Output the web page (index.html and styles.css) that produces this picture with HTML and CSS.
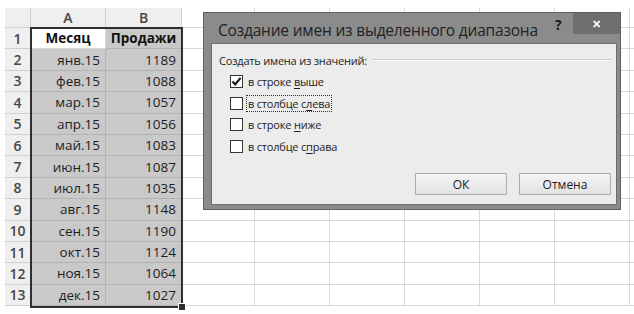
FILE: index.html
```html
<!DOCTYPE html>
<html lang="ru">

<head>
    <meta charset="UTF-8">
    <meta name="viewport" content="width=device-width, initial-scale=1.0">
    <title>Создание имен из выделенного диапазона</title>
    <link rel="stylesheet" href="styles.css">
</head>

<body>
    <div class="sheet">
        <div class="hd corner"></div><div class="hd">A</div><div class="hd">B</div><div class="blank"></div><div class="blank"></div><div class="blank"></div><div class="blank"></div><div class="blank"></div><div class="blank"></div><div class="blank"></div>

        <div class="hd row">1</div><div class="cell active bold center">Месяц</div><div class="cell sel bold center">Продажи</div><div></div><div></div><div></div><div></div><div></div><div></div><div></div>
        <div class="hd row">2</div><div class="cell sel">янв.15</div><div class="cell sel">1189</div><div></div><div></div><div></div><div></div><div></div><div></div><div></div>
        <div class="hd row">3</div><div class="cell sel">фев.15</div><div class="cell sel">1088</div><div></div><div></div><div></div><div></div><div></div><div></div><div></div>
        <div class="hd row">4</div><div class="cell sel">мар.15</div><div class="cell sel">1057</div><div></div><div></div><div></div><div></div><div></div><div></div><div></div>
        <div class="hd row">5</div><div class="cell sel">апр.15</div><div class="cell sel">1056</div><div></div><div></div><div></div><div></div><div></div><div></div><div></div>
        <div class="hd row">6</div><div class="cell sel">май.15</div><div class="cell sel">1083</div><div></div><div></div><div></div><div></div><div></div><div></div><div></div>
        <div class="hd row">7</div><div class="cell sel">июн.15</div><div class="cell sel">1087</div><div></div><div></div><div></div><div></div><div></div><div></div><div></div>
        <div class="hd row">8</div><div class="cell sel">июл.15</div><div class="cell sel">1035</div><div></div><div></div><div></div><div></div><div></div><div></div><div></div>
        <div class="hd row">9</div><div class="cell sel">авг.15</div><div class="cell sel">1148</div><div></div><div></div><div></div><div></div><div></div><div></div><div></div>
        <div class="hd row">10</div><div class="cell sel">сен.15</div><div class="cell sel">1190</div><div></div><div></div><div></div><div></div><div></div><div></div><div></div>
        <div class="hd row">11</div><div class="cell sel">окт.15</div><div class="cell sel">1124</div><div></div><div></div><div></div><div></div><div></div><div></div><div></div>
        <div class="hd row">12</div><div class="cell sel">ноя.15</div><div class="cell sel">1064</div><div></div><div></div><div></div><div></div><div></div><div></div><div></div>
        <div class="hd row">13</div><div class="cell sel">дек.15</div><div class="cell sel">1027</div><div></div><div></div><div></div><div></div><div></div><div></div><div></div>

        <div class="selection"><span class="handle"></span></div>
    </div>

    <div class="dialog">
        <div class="titlebar">
            <span class="title">Создание имен из выделенного диапазона</span>
            <span class="help">?</span>
            <span class="close">✕</span>
        </div>
        <div class="panel">
            <div class="group">
                <span>Создать имена из значений:</span>
                <span class="rule"></span>
            </div>
            <label class="check"><span class="box on"><svg viewBox="0 0 11 11" width="11" height="11"><path d="M1.5 5.5 L4.2 8.4 L9.6 1.8" fill="none" stroke="#111" stroke-width="2"/></svg></span><span class="txt">в строке <u>в</u>ыше</span></label>
            <label class="check"><span class="box"></span><span class="txt focus">в столбце с<u>л</u>ева</span></label>
            <label class="check"><span class="box"></span><span class="txt">в строке <u>н</u>иже</span></label>
            <label class="check"><span class="box"></span><span class="txt">в столбце с<u>п</u>рава</span></label>
            <div class="buttons">
                <button class="btn">ОК</button>
                <button class="btn">Отмена</button>
            </div>
        </div>
    </div>
</body>

</html>
```

FILE: styles.css
```css
body {
    margin: 0;
    padding: 0;
    background: white;
    font-family: "Open Sans", "Noto Sans", sans-serif;
    overflow: hidden;
    width: 634px;
    height: 314px;
    position: relative;
}

/* spreadsheet */

.sheet {
    display: grid;
    grid-template-columns: 26px 75px 76px 73px 75px 75px 75px 75px 75px 75px;
    grid-template-rows: 20px repeat(13, 21.4px);
    margin: 8px 0 0 5px;
    position: relative;
    width: 700px;
}

.sheet > div {
    box-sizing: border-box;
    border-right: 1px solid #d9d9d9;
    border-bottom: 1px solid #d9d9d9;
}

.hd {
    background: #efefef;
    color: #474747;
    font-size: 14px;
    font-weight: 600;
    display: flex;
    align-items: center;
    justify-content: center;
    border-color: #d0d0d0 !important;
}

.corner {
    background: #efefef;
}

.cell {
    font-size: 13.5px;
    color: #1e1e1e;
    display: flex;
    align-items: center;
    justify-content: flex-end;
    padding-right: 5px;
}

.sel {
    background: #c9c9c9;
    border-color: #b3b3b3 !important;
}

.active {
    background: white;
}

.bold {
    font-weight: 700;
    color: #111;
}

.center {
    justify-content: center;
    padding-right: 0;
}

.selection {
    position: absolute;
    left: 25px;
    top: 19px;
    width: 153px;
    height: 281px;
    box-sizing: border-box;
    border: 2px solid #2f2f2f !important;
}

.handle {
    position: absolute;
    right: -5px;
    bottom: -5px;
    width: 6px;
    height: 6px;
    background: #2f2f2f;
    border: 1px solid white;
}

/* dialog */

.dialog {
    position: absolute;
    left: 203px;
    top: 12px;
    width: 418px;
    height: 198px;
    box-sizing: border-box;
    background: #8b8b8b;
    border: 1px solid #5f5f5f;
    display: flex;
    flex-direction: column;
}

.titlebar {
    height: 30px;
    display: flex;
    align-items: flex-start;
    position: relative;
}

.title {
    margin: 6px 0 0 14px;
    font-size: 15.5px;
    color: #222;
    letter-spacing: -0.2px;
}

.help {
    position: absolute;
    left: 351px;
    top: 2px;
    font-size: 14px;
    font-weight: 700;
    color: #1a1a1a;
}

.close {
    position: absolute;
    right: 0;
    top: 0;
    width: 47px;
    height: 21px;
    background: #6f6f6f;
    color: white;
    font-size: 11px;
    font-weight: 700;
    display: flex;
    align-items: center;
    justify-content: center;
}

.panel {
    flex: 1;
    margin: 0 3px 4px 7px;
    background: #ececec;
    border: 1px solid #6c6c6c;
    padding: 8px 5px 9px 7px;
    display: flex;
    flex-direction: column;
    font-size: 11px;
    letter-spacing: -0.2px;
    color: #1d1d1d;
}

.group {
    display: flex;
    align-items: center;
    height: 16px;
    margin-bottom: 3px;
}

.rule {
    flex: 1;
    margin-left: 6px;
    border-top: 1px solid #cdcdcd;
    border-bottom: 1px solid #f8f8f8;
}

.check {
    display: flex;
    align-items: center;
    height: 21.5px;
    padding-left: 11px;
}

.box {
    width: 13px;
    height: 13px;
    box-sizing: border-box;
    border: 1px solid #333;
    background: white;
    display: flex;
    align-items: center;
    justify-content: center;
}

.txt {
    margin-left: 3px;
    padding: 0 1px;
    border: 1px dotted transparent;
}

.focus {
    border-color: #333;
}

.txt u {
    text-underline-offset: 2px;
}

.buttons {
    margin-top: auto;
    display: flex;
    justify-content: flex-end;
    gap: 12px;
}

.btn {
    width: 92px;
    height: 22px;
    font-family: inherit;
    font-size: 12px;
    color: #1d1d1d;
    background: linear-gradient(#f4f4f4, #e3e3e3);
    border: 1px solid #acacac;
    border-radius: 0;
    padding: 0;
}
```
